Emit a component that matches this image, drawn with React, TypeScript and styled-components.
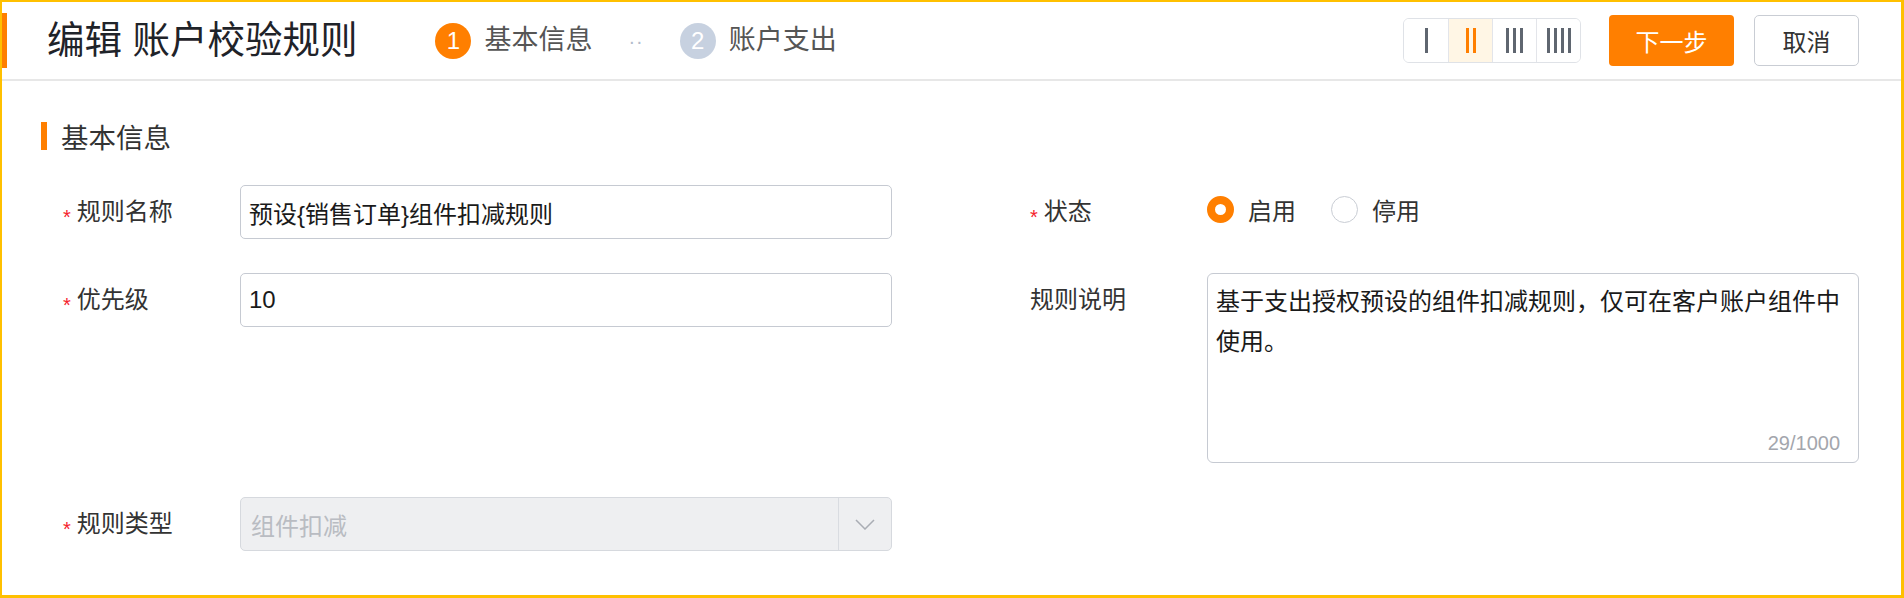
import React from 'react';
import styled, { createGlobalStyle } from 'styled-components';

const Global = createGlobalStyle`
  html, body { margin: 0; padding: 0; background: #fff; }
  body { font-family: "Liberation Sans", "Noto Sans CJK SC", sans-serif; }
  * { box-sizing: border-box; }
`;

const ORANGE = '#ff7f00';

const Frame = styled.div`
  width: 1904px;
  height: 598px;
  border: 2px solid #ffc000;
  border-right-width: 3px;
  border-bottom-width: 3px;
  display: flex;
  flex-direction: column;
  background: #fff;
  overflow: hidden;
`;

const Header = styled.header`
  flex: none;
  height: 79px;
  display: flex;
  align-items: center;
  border-bottom: 2px solid #e7e7e7;
  padding-right: 42px;
`;

const Marker = styled.div`
  flex: none;
  width: 5px;
  height: 55px;
  background: ${ORANGE};
`;

const Title = styled.h1`
  margin: 0 0 0 40px;
  font-size: 37.5px;
  font-weight: 400;
  line-height: 1;
  color: #1f2329;
  white-space: nowrap;
`;

const Steps = styled.div`
  display: flex;
  align-items: center;
  margin-left: 78px;
`;

const Step = styled.div`
  display: flex;
  align-items: center;
  gap: 13px;
`;

const StepNum = styled.span<{ $active?: boolean }>`
  width: 36px;
  height: 36px;
  border-radius: 50%;
  background: ${(p) => (p.$active ? ORANGE : '#c7d1e0')};
  color: #fff;
  font-size: 24px;
  display: flex;
  align-items: center;
  justify-content: center;
`;

const StepLabel = styled.span`
  font-size: 27px;
  color: #555;
  line-height: 1;
`;

const StepDots = styled.span`
  margin: 0 36px;
  color: #b3bccb;
  font-size: 20px;
  line-height: 1;
  letter-spacing: 1px;
`;

const Spacer = styled.div`
  flex: 1;
`;

const ColumnSwitch = styled.div`
  display: flex;
  height: 45px;
  border: 1.5px solid #dfe2e7;
  border-radius: 6px;
  overflow: hidden;
`;

const Segment = styled.div<{ $active?: boolean }>`
  width: 44px;
  display: flex;
  align-items: center;
  justify-content: center;
  background: ${(p) => (p.$active ? '#fff6e5' : '#fff')};
  & + & {
    border-left: 1.5px solid #e3e5ea;
  }
`;

const NextButton = styled.button`
  margin-left: 28px;
  width: 125px;
  height: 51px;
  border: none;
  border-radius: 4px;
  background: ${ORANGE};
  color: #fff;
  font-family: inherit;
  font-size: 24px;
  padding: 0;
`;

const CancelButton = styled.button`
  margin-left: 20px;
  width: 105px;
  height: 51px;
  border: 1.5px solid #c9cdd4;
  border-radius: 5px;
  background: #fff;
  color: #333;
  font-family: inherit;
  font-size: 24px;
  padding: 0;
`;

const Body = styled.main`
  flex: 1;
  padding: 41px 42px 0 39px;
`;

const SectionTitle = styled.div`
  display: flex;
  align-items: center;
  gap: 14px;
  height: 28px;
  font-size: 27.5px;
  color: #333;
`;

const SectionBar = styled.span`
  width: 6px;
  height: 28px;
  background: ${ORANGE};
`;

const FormGrid = styled.div`
  margin: 35px 0 0 22px;
  display: grid;
  grid-template-columns: 1fr 1fr;
  column-gap: 138px;
  row-gap: 34px;
  align-items: start;
`;

const Field = styled.div`
  display: grid;
  grid-template-columns: 177px 1fr;
  align-items: start;
`;

const Label = styled.label`
  height: 54px;
  line-height: 54px;
  font-size: 24px;
  color: #333;
  white-space: nowrap;
`;

const Star = styled.span`
  color: #f5222d;
  font-size: 20px;
  margin-right: 6px;
  vertical-align: -4px;
`;

const TextInput = styled.input`
  width: 100%;
  height: 54px;
  border: 1.5px solid #c6cad2;
  border-radius: 5px;
  padding: 0 8px;
  font-family: inherit;
  font-size: 24px;
  color: #1a1a1a;
  background: #fff;
  outline: none;
`;

const RadioGroup = styled.div`
  height: 48px;
  display: flex;
  align-items: center;
`;

const RadioItem = styled.span`
  display: flex;
  align-items: center;
  gap: 14px;
  margin-right: 35px;
  font-size: 24px;
  color: #333;
`;

const RadioCircle = styled.span<{ $checked?: boolean }>`
  width: 27px;
  height: 27px;
  border-radius: 50%;
  background: #fff;
  border: ${(p) => (p.$checked ? `8px solid ${ORANGE}` : '1.5px solid #c9cdd4')};
`;

const TextAreaBox = styled.div`
  height: 190px;
  border: 1.5px solid #c6cad2;
  border-radius: 6px;
  padding: 8px;
  display: flex;
  flex-direction: column;
`;

const TextArea = styled.textarea`
  flex: 1;
  border: none;
  outline: none;
  resize: none;
  padding: 0;
  margin: 0;
  font-family: inherit;
  font-size: 24px;
  line-height: 40px;
  color: #1a1a1a;
  overflow: hidden;
  background: transparent;
`;

const Counter = styled.div`
  text-align: right;
  font-size: 20px;
  line-height: 22px;
  color: #a3a6ad;
  padding-right: 10px;
`;

const SelectBox = styled.div`
  height: 54px;
  border: 1.5px solid #d6d9de;
  border-radius: 5px;
  background: #eeeff1;
  display: flex;
`;

const SelectValue = styled.span`
  flex: 1;
  display: flex;
  align-items: center;
  padding: 0 10px;
  font-size: 24px;
  color: #b9bcc2;
`;

const SelectArrow = styled.span`
  width: 53px;
  border-left: 1.5px solid #d9dce1;
  display: flex;
  align-items: center;
  justify-content: center;
`;

const Bars: React.FC<{ n: number; color: string }> = ({ n, color }) => {
  const w = n * 7 - 4;
  return (
    <svg width={w} height={25} viewBox={`0 0 ${w} 25`}>
      {Array.from({ length: n }).map((_, i) => (
        <rect key={i} x={i * 7} y={0} width={3} height={25} fill={color} />
      ))}
    </svg>
  );
};

export default function App() {
  return (
    <>
      <Global />
      <Frame>
        <Header>
          <Marker />
          <Title>编辑 账户校验规则</Title>
          <Steps>
            <Step>
              <StepNum $active>1</StepNum>
              <StepLabel>基本信息</StepLabel>
            </Step>
            <StepDots>··</StepDots>
            <Step>
              <StepNum>2</StepNum>
              <StepLabel>账户支出</StepLabel>
            </Step>
          </Steps>
          <Spacer />
          <ColumnSwitch>
            <Segment><Bars n={1} color="#5f6670" /></Segment>
            <Segment $active><Bars n={2} color={ORANGE} /></Segment>
            <Segment><Bars n={3} color="#5f6670" /></Segment>
            <Segment><Bars n={4} color="#5f6670" /></Segment>
          </ColumnSwitch>
          <NextButton>下一步</NextButton>
          <CancelButton>取消</CancelButton>
        </Header>
        <Body>
          <SectionTitle>
            <SectionBar />
            基本信息
          </SectionTitle>
          <FormGrid>
            <Field>
              <Label><Star>*</Star>规则名称</Label>
              <TextInput defaultValue="预设{销售订单}组件扣减规则" />
            </Field>
            <Field>
              <Label><Star>*</Star>状态</Label>
              <RadioGroup>
                <RadioItem><RadioCircle $checked />启用</RadioItem>
                <RadioItem><RadioCircle />停用</RadioItem>
              </RadioGroup>
            </Field>
            <Field>
              <Label><Star>*</Star>优先级</Label>
              <TextInput defaultValue="10" />
            </Field>
            <Field>
              <Label>规则说明</Label>
              <TextAreaBox>
                <TextArea defaultValue="基于支出授权预设的组件扣减规则，仅可在客户账户组件中使用。" />
                <Counter>29/1000</Counter>
              </TextAreaBox>
            </Field>
            <Field>
              <Label><Star>*</Star>规则类型</Label>
              <SelectBox>
                <SelectValue>组件扣减</SelectValue>
                <SelectArrow>
                  <svg width="20" height="11" viewBox="0 0 20 11">
                    <path d="M1 1 L10 10 L19 1" fill="none" stroke="#a9adb4" strokeWidth="1.5" />
                  </svg>
                </SelectArrow>
              </SelectBox>
            </Field>
          </FormGrid>
        </Body>
      </Frame>
    </>
  );
}
